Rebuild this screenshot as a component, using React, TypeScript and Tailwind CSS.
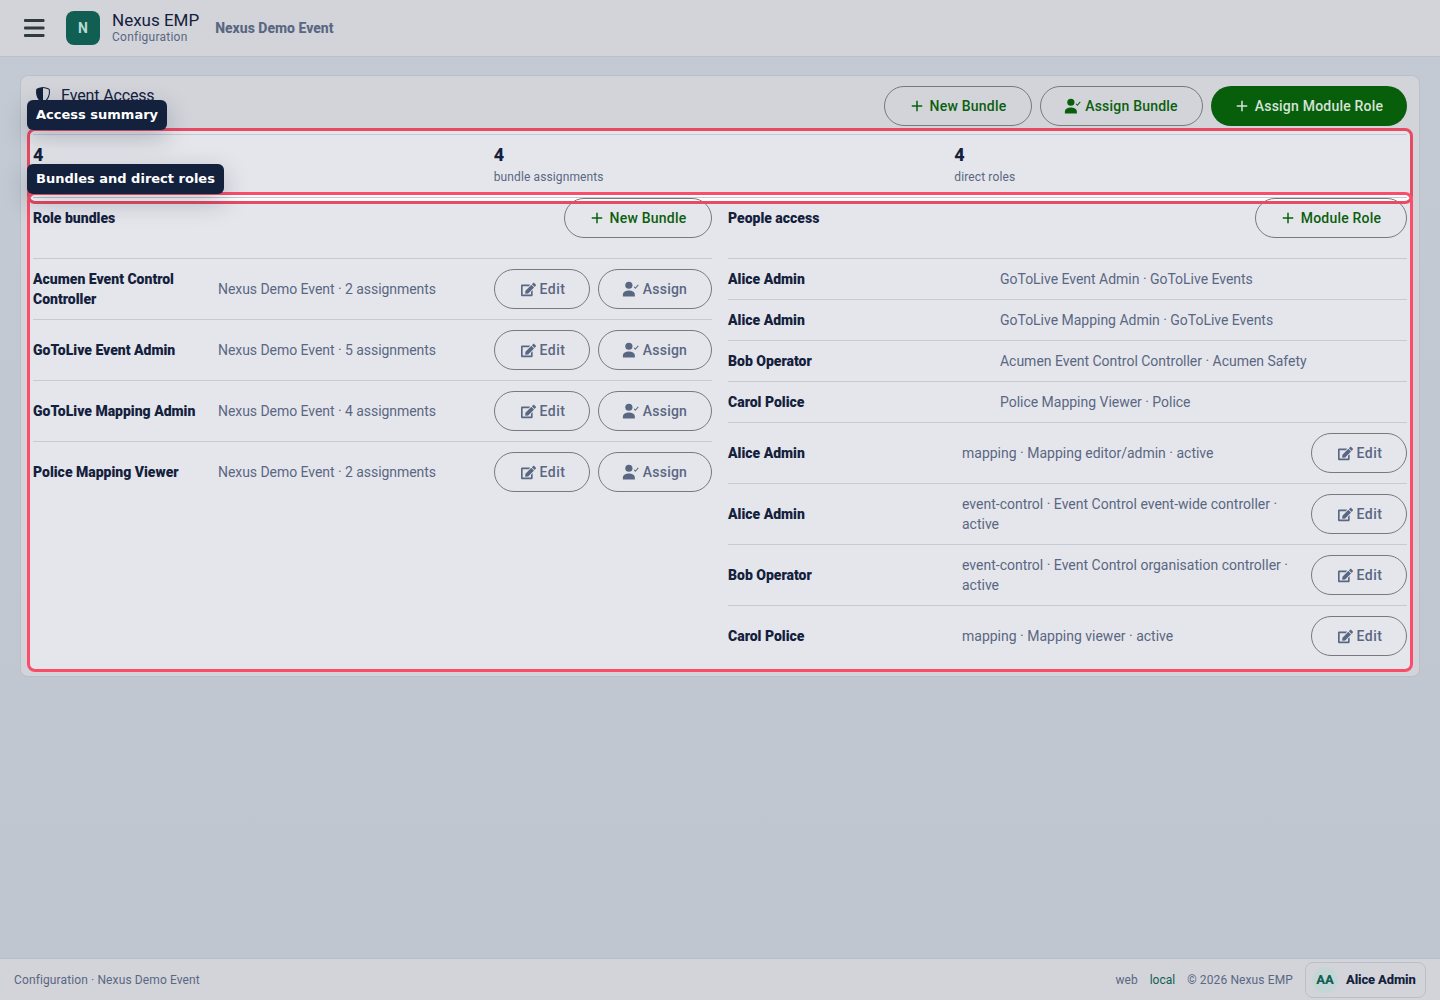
import { MdAdd } from "react-icons/md";
import { BsShieldShaded } from "react-icons/bs";
import { FaEdit } from "react-icons/fa";

const bundles = [
  { name: "Acumen Event Control Controller", meta: "Nexus Demo Event · 2 assignments" },
  { name: "GoToLive Event Admin", meta: "Nexus Demo Event · 5 assignments" },
  { name: "GoToLive Mapping Admin", meta: "Nexus Demo Event · 4 assignments" },
  { name: "Police Mapping Viewer", meta: "Nexus Demo Event · 2 assignments" },
];

const people = [
  { name: "Alice Admin", meta: "GoToLive Event Admin · GoToLive Events" },
  { name: "Alice Admin", meta: "GoToLive Mapping Admin · GoToLive Events" },
  { name: "Bob Operator", meta: "Acumen Event Control Controller · Acumen Safety" },
  { name: "Carol Police", meta: "Police Mapping Viewer · Police" },
];

const roles = [
  { name: "Alice Admin", meta: "mapping · Mapping editor/admin · active" },
  { name: "Alice Admin", meta: "event-control · Event Control event-wide controller · active" },
  { name: "Bob Operator", meta: "event-control · Event Control organisation controller · active" },
  { name: "Carol Police", meta: "mapping · Mapping viewer · active" },
];

const stats = [
  { value: "4", label: "bundles" },
  { value: "4", label: "bundle assignments" },
  { value: "4", label: "direct roles" },
];

function PersonCheck() {
  return (
    <svg viewBox="0 0 24 24" className="w-[18px] h-[18px]" fill="currentColor">
      <circle cx="10.5" cy="7" r="4.8" />
      <path d="M2.5 22v-2.5C2.5 15.8 7 14 10.5 14S18.5 15.8 18.5 19.5V22z" />
      <path d="M17.5 9l1.6 2L23 6.5" fill="none" stroke="currentColor" strokeWidth="1.4" />
    </svg>
  );
}

function PillButton({ icon, label, width, green }: { icon: React.ReactNode; label: React.ReactNode; width: string; green?: boolean }) {
  return (
    <button
      className={`${width} h-10 shrink-0 flex items-center justify-center gap-1 rounded-full border border-[#77797b] pr-0.5 text-sm font-medium tracking-[0.015em] ${
        green ? "text-[#0a5f0d]" : "text-[#5a6783]"
      }`}
    >
      {icon}
      {label}
    </button>
  );
}

const EditButton = () => (
  <PillButton width="w-24" label={<span className="tracking-[0.5px]">Edit</span>} icon={<FaEdit className="ml-1 w-[15px] h-[15px]" />} />
);

export default function App() {
  return (
    <div
      className="relative h-[1000px] flex flex-col bg-[linear-gradient(180deg,#c3cad3,#bfc6d0)] text-[#14213d] overflow-hidden"
      style={{ fontFamily: "Roboto, sans-serif" }}
    >
      <header className="h-[57px] shrink-0 flex items-center bg-[#d2d4da] border-b border-[#b9c0cc] pl-5">
        <svg viewBox="0 0 28 28" className="w-7 h-7 text-[#2f3b3c]" fill="currentColor">
          <rect x="4" y="5" width="20.5" height="3" rx="1" />
          <rect x="4" y="12.5" width="20.5" height="3" rx="1" />
          <rect x="4" y="20" width="20.5" height="3" rx="1" />
        </svg>
        <div className="ml-[18px] w-[34px] h-[34px] rounded-lg bg-[#115e53] text-[#b5dbd5] flex items-center justify-center text-sm font-bold">N</div>
        <div className="ml-3 leading-none">
          <div className="text-[17px] leading-[18px] text-[#14213d]">Nexus EMP</div>
          <div className="text-xs leading-[16px] tracking-[0.02em] text-[#5a6783]">Configuration</div>
        </div>
        <div className="ml-4 text-sm font-extrabold text-[#5a6783]">Nexus Demo Event</div>
      </header>

      <main className="flex-1 px-5 pt-[18px]">
        <div className="relative h-[602px] rounded-lg bg-[#d2d4da] border border-[#b9c0cc]">
          <div className="flex justify-between pt-[10px] pl-[14px] pr-3 h-[55px]">
            <div className="flex items-start gap-2.5">
              <BsShieldShaded className="w-4 h-4 mt-[1px]" />
              <span className="text-base leading-5 tracking-[-0.15px]">Event Access</span>
            </div>
            <div className="flex gap-2">
              <PillButton green width="w-[148px]" label="New Bundle" icon={<MdAdd className="w-[18px] h-[18px]" />} />
              <PillButton green width="w-[163px]" label="Assign Bundle" icon={<PersonCheck />} />
              <button className="w-[196px] h-10 flex items-center justify-center gap-1 rounded-full bg-[#075f0c] pr-0.5 text-[#d7e3d7] text-sm font-medium tracking-[0.015em]">
                <MdAdd className="w-[18px] h-[18px]" />
                Assign Module Role
              </button>
            </div>
          </div>

          <div className="mx-[7px] h-[64px] bg-[#e5e6eb] rounded-t-md px-[5px] pt-[3px]">
            <div className="grid grid-cols-3 gap-2 border-t border-[#c5cad3] h-full pt-2">
              {stats.map((s, i) => (
                <div key={s.label}>
                  <div className="text-lg leading-6 font-extrabold">{s.value}</div>
                  <div className={`mt-0.5 text-xs leading-4 tracking-[0.01em] text-[#5a6783] ${i === 0 ? "invisible" : ""}`}>{s.label}</div>
                </div>
              ))}
            </div>
          </div>

          <div className="mx-[7px] h-[474px] bg-[linear-gradient(180deg,#ffffff_6px,#e5e6eb_6px)] rounded-b-md px-[5px] pt-[2px]">
            <div className="border-t border-[#c5cad3] grid grid-cols-2 gap-4">
              <section>
                <div className="h-[61px] flex justify-between border-b border-[#c5cad3]">
                  <span className="text-sm font-black leading-10">Role bundles</span>
                  <PillButton green width="w-[148px]" label="New Bundle" icon={<MdAdd className="w-[18px] h-[18px]" />} />
                </div>
                {bundles.map((b, i) => (
                  <div key={b.name} className={`h-[61px] flex items-center border-b ${i < 3 ? "border-[#c5cad3]" : "border-transparent"}`}>
                    <div className="w-[173px] mr-3 text-sm font-black leading-5">{b.name}</div>
                    <div className="flex-1 text-sm tracking-[-0.05px] text-[#5a6783]">{b.meta}</div>
                    <div className="flex gap-2">
                      <EditButton />
                      <PillButton width="w-[114px]" label="Assign" icon={<PersonCheck />} />
                    </div>
                  </div>
                ))}
              </section>

              <section>
                <div className="h-[61px] flex justify-between border-b border-[#c5cad3]">
                  <span className="text-sm font-black leading-10">People access</span>
                  <PillButton green width="w-[152px]" label="Module Role" icon={<MdAdd className="w-[18px] h-[18px]" />} />
                </div>
                {people.map((p) => (
                  <div key={p.meta} className="h-[41px] flex items-center border-b border-[#c5cad3]">
                    <div className="w-[272px] text-sm font-black">{p.name}</div>
                    <div className="flex-1 text-sm tracking-[-0.02px] text-[#5a6783]">{p.meta}</div>
                  </div>
                ))}
                {roles.map((r, i) => (
                  <div key={r.meta} className={`h-[61px] flex items-center border-b ${i < 3 ? "border-[#c5cad3]" : "border-transparent"}`}>
                    <div className="w-[234px] shrink-0 text-sm font-black">{r.name}</div>
                    <div className="w-[330px] text-sm leading-5 text-[#5a6783]">{r.meta}</div>
                    <div className="ml-auto">
                      <EditButton />
                    </div>
                  </div>
                ))}
              </section>
            </div>
          </div>

          <div className="absolute left-[6px] top-[52px] w-[1386px] h-[76px] rounded-lg border-[3px] border-[#e94a63]" />
          <div className="absolute left-[6px] top-[116px] w-[1386px] h-[480px] rounded-lg border-[3px] border-[#fb4d6a]" />
          <div
            className="absolute left-[6px] top-[24px] h-[30px] px-[9px] flex items-center rounded-md bg-[#14213d] text-white text-[13px] font-bold shadow-[0_8px_24px_rgba(20,33,61,0.25)]"
            style={{ fontFamily: "'DejaVu Sans', sans-serif" }}
          >
            Access summary
          </div>
          <div
            className="absolute left-[6px] top-[88px] h-[30px] px-[9px] flex items-center rounded-md bg-[#14213d] text-white text-[13px] font-bold shadow-[0_8px_24px_rgba(20,33,61,0.25)]"
            style={{ fontFamily: "'DejaVu Sans', sans-serif" }}
          >
            Bundles and direct roles
          </div>
        </div>
      </main>

      <footer className="h-[42px] shrink-0 flex items-center justify-between bg-[#d2d4da] border-t border-[#b9c0cc] pl-3.5 pr-3.5 text-xs text-[#5a6783]">
        <span className="tracking-[0.01em]">Configuration · Nexus Demo Event</span>
        <div className="flex items-center">
          <span>web</span>
          <span className="ml-3 text-[#115e53]">local</span>
          <span className="ml-3 tracking-[0.01em]">© 2026 Nexus EMP</span>
          <div className="ml-3 w-[121px] h-9 flex items-center gap-2 rounded-lg border border-[#b9c0cc] pl-1.5">
            <span className="w-[26px] h-[26px] rounded-full bg-[#c5d6d6] text-[#115e53] flex items-center justify-center text-[13px] font-extrabold">AA</span>
            <span className="text-[#14213d] text-[13px] font-extrabold tracking-[-0.01em]">Alice Admin</span>
          </div>
        </div>
      </footer>
    </div>
  );
}
